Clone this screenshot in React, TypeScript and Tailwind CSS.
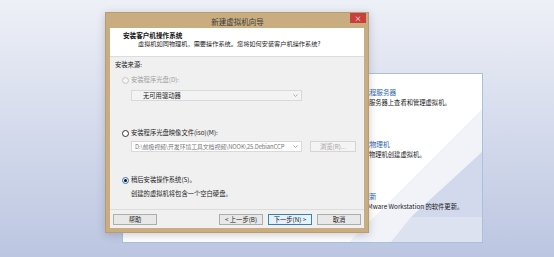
import React from 'react';

type RadioState = 'disabled' | 'off' | 'on';

function Radio({ state }: { state: RadioState }) {
  if (state === 'on') {
    return (
      <span className="flex items-center justify-center w-[7px] h-[7px] rounded-full border border-[#3c7fb1] bg-[#dcecfc] shrink-0">
        <span className="w-[3px] h-[3px] rounded-full bg-[#111]" />
      </span>
    );
  }
  if (state === 'disabled') {
    return <span className="w-[7px] h-[7px] rounded-full border border-[#c6c6c6] bg-[#f4f4f4] shrink-0" />;
  }
  return <span className="w-[7px] h-[7px] rounded-full border border-[#333] bg-white shrink-0" />;
}

function Chevron() {
  return (
    <svg width="5" height="3" viewBox="0 0 5 3" className="shrink-0">
      <path d="M0.5 0.5 L2.5 2.5 L4.5 0.5" fill="none" stroke="#9a9a9a" strokeWidth="0.8" />
    </svg>
  );
}

function Button({ label, focused }: { label: string; focused?: boolean }) {
  return (
    <div
      className={`flex items-center justify-center w-[44px] h-[11px] border text-[#1a1a1a] ${
        focused ? 'border-[#3c7fb1] bg-[#e5f1fb]' : 'border-[#adadad] bg-[#e8e8e8]'
      }`}
    >
      {label}
    </div>
  );
}

// 背景里的主页面板（被对话框挡住一部分）
function HomePanel() {
  const items = [
    { title: '连接远程服务器', desc: '在远程服务器上查看和管理虚拟机。' },
    { title: '虚拟化物理机', desc: '从一台物理机创建虚拟机。' },
    { title: '软件更新', desc: '检查 VMware Workstation 的软件更新。' },
  ];
  return (
    <div className="absolute left-[122px] top-[73px] w-[361px] h-[170px] border border-[#a9c1dd] bg-white overflow-hidden">
      <svg className="absolute inset-0" width="359" height="168" viewBox="0 0 359 168">
        <polygon points="226,168 359,35 359,168" fill="#f1f3f9" />
        <polygon points="300,168 359,109 359,168" fill="#e2e6f2" />
        <polygon points="288,143 359,143 359,78" fill="#d3d9ec" />
        <polygon points="288,143 359,143 359,168 268,168" fill="#dde2f0" />
      </svg>
      <div className="relative flex flex-col pl-[227px] pt-[14px] gap-[33px]">
        {items.map(it => (
          <div key={it.title} className="flex flex-col">
            <div className="text-[6.6px] leading-[8px] text-[#2a64ad] whitespace-nowrap">{it.title}</div>
            <div className="mt-[3px] text-[6.3px] leading-[8px] text-[#222] whitespace-nowrap">{it.desc}</div>
          </div>
        ))}
      </div>
    </div>
  );
}

function WizardDialog() {
  return (
    <div className="absolute left-[105px] top-[12px] w-[264px] h-[221px] flex flex-col bg-[#c9ad80] border border-[#b89d70] shadow-[0_2px_8px_rgba(60,60,90,0.25)]">
      {/* 标题栏 */}
      <div className="flex items-start h-[15px] shrink-0">
        <div className="w-[19px] shrink-0" />
        <div className="flex-1 text-center text-[7.5px] leading-[15px] text-[#3c3c3c] pt-[0.5px]">新建虚拟机向导</div>
        <div className="flex items-center justify-center w-[16px] h-[10px] mr-[2px] bg-[#c8403e] text-white text-[7px] leading-none">
          ×
        </div>
      </div>

      {/* 客户区 */}
      <div className="flex flex-col mx-[4px] h-[200px] bg-[#f0f0f0]">
        <div className="h-[29px] shrink-0 bg-white border-b border-[#dcdcdc] pt-[3px] pl-[13px]">
          <div className="font-bold text-[6.6px] leading-[8px] text-[#111]">安装客户机操作系统</div>
          <div className="pl-[15px] mt-[0.5px] text-[6.2px] leading-[8px] text-[#1e1e1e] whitespace-nowrap">
            虚拟机如同物理机，需要操作系统。您将如何安装客户机操作系统?
          </div>
        </div>

        <div className="h-[152px] shrink-0 flex flex-col pl-[5px] pt-[4px] text-[6.3px] leading-[8px]">
          <div className="text-[#1e1e1e]">安装来源:</div>

          <div className="mt-[7px] pl-[7px] h-[8px] flex items-center gap-[2px] text-[#a0a0a0]">
            <Radio state="disabled" />
            <span>安装程序光盘(D):</span>
          </div>
          <div className="mt-[6px] ml-[16px] w-[171px] h-[11px] flex items-center justify-between pl-[11px] pr-[3px] border border-[#d9d9d9] bg-[#f3f3f3] text-[#1e1e1e]">
            <span>无可用驱动器</span>
            <Chevron />
          </div>

          <div className="mt-[28px] pl-[7px] h-[8px] flex items-center gap-[2px] text-[#1e1e1e]">
            <Radio state="off" />
            <span>安装程序光盘映像文件(iso)(M):</span>
          </div>
          <div className="mt-[4px] flex items-center">
            <div className="ml-[16px] w-[171px] h-[11px] flex items-center justify-between pl-[3px] pr-[3px] border border-[#d9d9d9] bg-white text-[#777]">
              <span className="whitespace-nowrap text-[5.9px] tracking-[-0.1px]">{'D:\\前极视频\\开发环境工具文档视频\\NOOK\\25.DebianCCP'}</span>
              <Chevron />
            </div>
            <div className="ml-[8px] w-[46px] h-[11px] flex items-center justify-center border border-[#d5d5d5] bg-[#f4f4f4] text-[#a3a3a3]">
              浏览(R)...
            </div>
          </div>

          <div className="mt-[24px] pl-[7px] h-[8px] flex items-center gap-[2px] text-[#1e1e1e]">
            <Radio state="on" />
            <span>稍后安装操作系统(S)。</span>
          </div>
          <div className="mt-[6px] pl-[16px] text-[#1e1e1e]">创建的虚拟机将包含一个空白硬盘。</div>
        </div>

        <div className="flex-1 flex items-start border-t border-[#dcdcdc] pt-[4px] px-[3px] text-[6.3px] leading-[8px]">
          <Button label="帮助" />
          <div className="flex-1" />
          <div className="flex gap-[5px]">
            <Button label="< 上一步(B)" />
            <Button label="下一步(N) >" focused />
            <Button label="取消" />
          </div>
        </div>
      </div>
    </div>
  );
}

export default function App() {
  return (
    <div className="relative w-[554px] h-[257px] overflow-hidden bg-linear-to-b from-[#eef0f7] to-[#bcc6e1] font-['Noto_Sans_CJK_SC','Noto_Sans',sans-serif]">
      <HomePanel />
      <WizardDialog />
    </div>
  );
}
